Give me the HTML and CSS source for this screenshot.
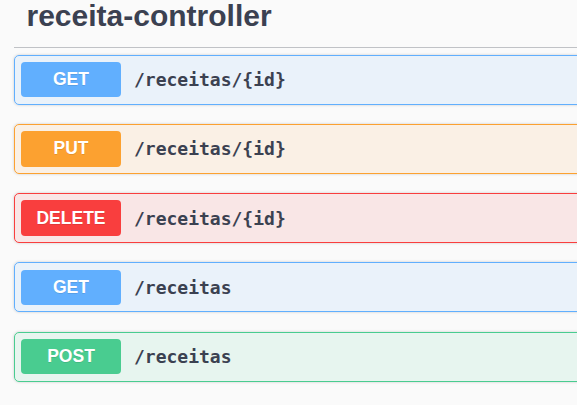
FILE: index.html
```html
<!DOCTYPE html>
<html>
<head>
<meta charset="utf-8">
<link rel="stylesheet" href="styles.css">
</head>
<body>
<div class="tag-section">
  <h3 class="tag">receita-controller</h3>
  <div class="ops">
    <div class="op op-get"><span class="method">GET</span><span class="path">/receitas/{id}</span></div>
    <div class="op op-put"><span class="method">PUT</span><span class="path">/receitas/{id}</span></div>
    <div class="op op-delete"><span class="method">DELETE</span><span class="path">/receitas/{id}</span></div>
    <div class="op op-get"><span class="method">GET</span><span class="path">/receitas</span></div>
    <div class="op op-post"><span class="method">POST</span><span class="path">/receitas</span></div>
  </div>
</div>
</body>
</html>
```
FILE: styles.css
```css
html, body {
  margin: 0;
  padding: 0;
  background: #fafafa;
  overflow: hidden;
}
body {
  width: 577px;
  height: 405px;
}
.tag-section {
  width: 620px;
  margin-left: 14px;
}
.tag {
  margin: 1.3px 0 6.25px 0;
  padding: 0 0 16px 12.5px;
  font-family: "Liberation Sans", Arial, sans-serif;
  font-weight: bold;
  font-size: 30px;
  line-height: 30px;
  color: #3b4151;
  border-bottom: 1px solid rgba(59, 65, 81, 0.3);
}
.ops {
  display: flex;
  flex-direction: column;
  gap: 19.3px;
}
.op {
  display: flex;
  align-items: center;
  height: 50px;
  box-sizing: border-box;
  padding: 0 6px;
  border: 1px solid;
  border-radius: 5px;
  box-shadow: 0 0 3px rgba(0, 0, 0, 0.19);
}
.method {
  width: 100px;
  height: 35.5px;
  display: flex;
  align-items: center;
  justify-content: center;
  border-radius: 4px;
  color: #fff;
  font-family: "Liberation Sans", Arial, sans-serif;
  font-weight: bold;
  font-size: 17.5px;
  text-shadow: 0 1px 0 rgba(0, 0, 0, 0.1);
}
.path {
  padding-left: 13px;
  font-family: "DejaVu Sans Mono", monospace;
  font-weight: bold;
  font-size: 18px;
  color: #3b4151;
}
.op-get { background: rgba(97, 175, 254, 0.1); border-color: #61affe; }
.op-get .method { background: #61affe; }
.op-put { background: rgba(252, 161, 48, 0.1); border-color: #fca130; }
.op-put .method { background: #fca130; }
.op-delete { background: rgba(249, 62, 62, 0.1); border-color: #f93e3e; }
.op-delete .method { background: #f93e3e; }
.op-post { background: rgba(73, 204, 144, 0.1); border-color: #49cc90; }
.op-post .method { background: #49cc90; }
```
